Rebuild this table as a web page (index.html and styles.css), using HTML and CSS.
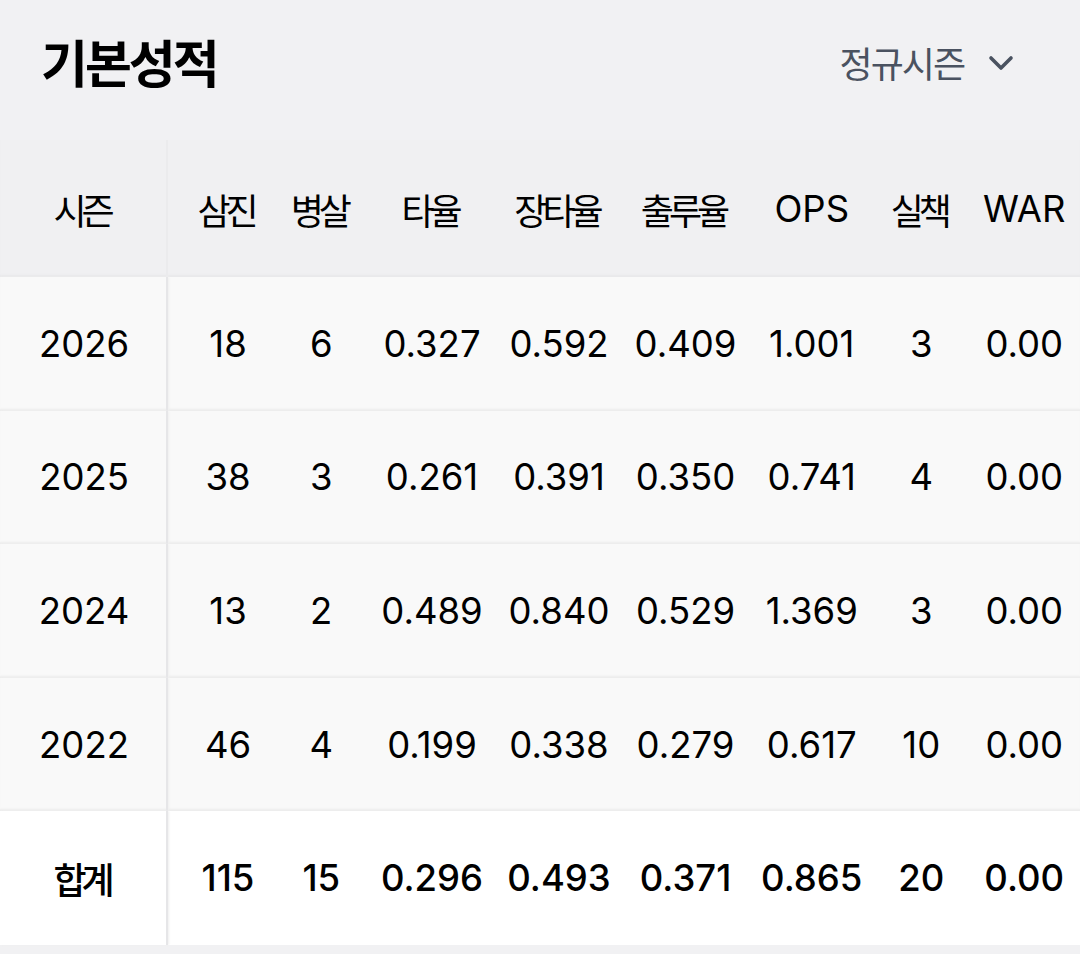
FILE: index.html
```html
<!DOCTYPE html>
<html lang="ko">
<head>
<meta charset="utf-8">
<title>기본성적</title>
<link rel="stylesheet" href="styles.css">
</head>
<body>
<div class="page">
  <div class="top">
    <h1 class="title">기본성적</h1>
    <div class="select">
      <span class="select-label">정규시즌</span>
      <svg class="chev" width="26" height="16" viewBox="0 0 26 16"><path d="M3 3 L13 13 L23 3" fill="none" stroke="#4a5260" stroke-width="3.6" stroke-linecap="round" stroke-linejoin="round"/></svg>
    </div>
  </div>

  <div class="table">
    <div class="row head">
      <div class="fixed ko">시즌</div>
      <div class="cells">
        <div class="ko">삼진</div><div class="ko">병살</div><div class="ko">타율</div><div class="ko">장타율</div><div class="ko">출루율</div><div>OPS</div><div class="ko">실책</div><div>WAR</div>
      </div>
    </div>
    <div class="row data">
      <div class="fixed">2026</div>
      <div class="cells">
        <div>18</div><div>6</div><div>0.327</div><div>0.592</div><div>0.409</div><div>1.001</div><div>3</div><div>0.00</div>
      </div>
    </div>
    <div class="row data">
      <div class="fixed">2025</div>
      <div class="cells">
        <div>38</div><div>3</div><div>0.261</div><div>0.391</div><div>0.350</div><div>0.741</div><div>4</div><div>0.00</div>
      </div>
    </div>
    <div class="row data">
      <div class="fixed">2024</div>
      <div class="cells">
        <div>13</div><div>2</div><div>0.489</div><div>0.840</div><div>0.529</div><div>1.369</div><div>3</div><div>0.00</div>
      </div>
    </div>
    <div class="row data">
      <div class="fixed">2022</div>
      <div class="cells">
        <div>46</div><div>4</div><div>0.199</div><div>0.338</div><div>0.279</div><div>0.617</div><div>10</div><div>0.00</div>
      </div>
    </div>
    <div class="row total">
      <div class="fixed ko">합계</div>
      <div class="cells">
        <div>115</div><div>15</div><div>0.296</div><div>0.493</div><div>0.371</div><div>0.865</div><div>20</div><div>0.00</div>
      </div>
    </div>
  </div>
</div>
</body>
</html>
```

FILE: styles.css
```css
html, body {
  margin: 0;
  padding: 0;
}
body {
  background: #f1f1f3;
  font-family: "Inter", "Noto Sans CJK KR", sans-serif;
  color: #000;
  width: 1080px;
  height: 954px;
  overflow: hidden;
}
.page {
  display: flex;
  flex-direction: column;
}
.top {
  height: 128px;
  display: flex;
  align-items: center;
  justify-content: space-between;
  padding: 0 66px 0 41px;
  box-sizing: border-box;
}
.title {
  margin: 0 0 6px 0;
  font-family: "Noto Sans CJK KR", sans-serif;
  font-size: 51px;
  font-weight: 700;
  letter-spacing: -3px;
  line-height: 1;
}
.select {
  display: flex;
  align-items: center;
  gap: 24px;
  margin-bottom: 4px;
}
.select-label {
  font-family: "Noto Sans CJK KR", sans-serif;
  font-size: 36px;
  font-weight: 400;
  letter-spacing: -2px;
  color: #4a5260;
}
.chev {
  display: block;
  margin-top: 2px;
}
.table {
  margin-top: 12px;
  display: flex;
  flex-direction: column;
}
.row {
  display: flex;
  align-items: stretch;
}
.row.head {
  height: 137px;
  background: #f0f0f2;
  box-shadow: inset 0 -3px 2px -1px #e8e8ea;
}
.row.data {
  height: 133.6px;
  background: #f9f9f9;
  box-shadow: inset 0 -3px 2px -1px #ededed;
}
.row.total {
  height: 133.6px;
  background: #ffffff;
}
.fixed {
  width: 168px;
  flex: none;
  display: flex;
  align-items: center;
  justify-content: center;
  font-size: 36px;
  border-right: 2px solid #e6e6e8;
  box-shadow: 1px 0 2px #efefef;
  box-sizing: border-box;
  padding-left: 2px;
}
.head .fixed {
  border-right-color: #ebebed;
  box-shadow: none;
}
.cells {
  flex: 1;
  display: grid;
  grid-template-columns: 94px 92.5px 129px 125px 128px 124.5px 94.5px 111.5px;
  padding-left: 13px;
  align-items: center;
}
.cells > div {
  text-align: center;
  font-size: 36.5px;
  white-space: nowrap;
}
.fixed {
  font-size: 36.5px;
}
.ko {
  font-family: "Noto Sans CJK KR", sans-serif;
  letter-spacing: -5px;
  font-size: 36px !important;
}
.cells > .ko {
  text-indent: -5px;
}
.fixed.ko {
  padding-left: 0;
  text-indent: -3px;
}
.total .cells > div,
.total .fixed {
  font-weight: 500;
}
.data .cells > div,
.data .fixed {
  font-weight: 400;
}
```
